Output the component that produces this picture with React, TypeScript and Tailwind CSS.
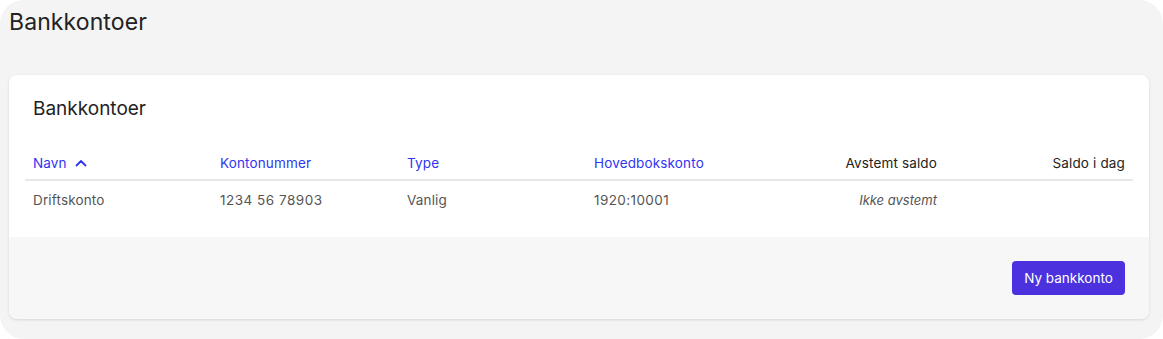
import React from "react";

export default function App() {
  const font = { fontFamily: "Inter, 'Noto Sans', sans-serif" };
  return (
    <div className="w-[1163px] h-[339px] bg-white" style={font}>
      <div className="w-full h-full bg-[#f4f4f4] rounded-[24px] px-[9px] pt-[8px]">
        <h1 className="text-[23px] leading-[28px] text-[#222] font-normal tracking-[0.1px]">Bankkontoer</h1>
        <div className="mt-[39px] w-[1140px] bg-white rounded-[8px] shadow-[0_1px_3px_rgba(0,0,0,0.12)] overflow-hidden">
          <div className="px-[16px] pt-[22px] pb-[17px]">
            <h2 className="px-[8px] text-[19px] leading-[24px] text-[#222] font-normal">Bankkontoer</h2>
            <table className="mt-[26px] w-[1108px] table-fixed border-collapse text-[13.5px] tracking-[0.15px]">
              <colgroup>
                <col className="w-[187px]" />
                <col className="w-[187px]" />
                <col className="w-[187px]" />
                <col className="w-[187px]" />
                <col className="w-[172px]" />
                <col className="w-[188px]" />
              </colgroup>
              <thead>
                <tr className="border-b-2 border-[#e8e8e8]">
                  <th className="px-[8px] h-[33px] text-left font-normal text-[#2f35f2]">
                    <span className="inline-flex items-center gap-[8px]">
                      Navn
                      <svg width="12" height="8" viewBox="0 0 12 8" fill="none">
                        <path d="M1.5 6.5L6 2L10.5 6.5" stroke="#2f35f2" strokeWidth="1.8" strokeLinecap="round" strokeLinejoin="round" />
                      </svg>
                    </span>
                  </th>
                  <th className="px-[8px] text-left font-normal text-[#2f35f2]">Kontonummer</th>
                  <th className="px-[8px] text-left font-normal text-[#2f35f2]">Type</th>
                  <th className="px-[8px] text-left font-normal text-[#2f35f2]">Hovedbokskonto</th>
                  <th className="px-[8px] text-right font-normal text-[#222]">Avstemt saldo</th>
                  <th className="px-[8px] text-right font-normal text-[#222]">Saldo i dag</th>
                </tr>
              </thead>
              <tbody>
                <tr className="text-[#555]">
                  <td className="px-[8px] h-[40px]">Driftskonto</td>
                  <td className="px-[8px] tracking-[0.5px]">1234 56 78903</td>
                  <td className="px-[8px]">Vanlig</td>
                  <td className="px-[8px] tracking-[0.4px]">1920:10001</td>
                  <td className="px-[8px] text-right italic text-[13px] tracking-normal">Ikke avstemt</td>
                  <td className="px-[8px]"></td>
                </tr>
              </tbody>
            </table>
          </div>
          <div className="bg-[#f7f7f7] h-[82px] flex items-center justify-end px-[24px]">
            <button className="h-[34px] w-[113px] rounded-[4px] bg-[#4b32de] text-white text-[13.5px]">
              Ny bankkonto
            </button>
          </div>
        </div>
      </div>
    </div>
  );
}
